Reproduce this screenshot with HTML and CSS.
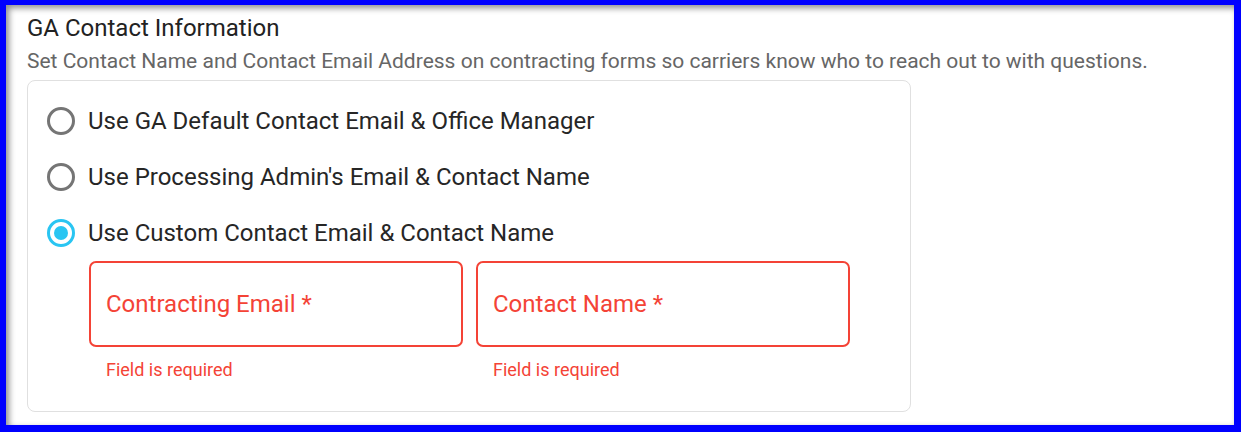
FILE: index.html
```html
<!DOCTYPE html>
<html lang="en">
<head>
    <meta charset="UTF-8">
    <title>GA Contact Information</title>
    <link rel="stylesheet" href="styles.css">
</head>
<body>
    <div class="frame">
        <section class="settings">
            <h2 class="title">GA Contact Information</h2>
            <p class="subtitle">Set Contact Name and Contact Email Address on contracting forms so carriers know who to reach out to with questions.</p>

            <div class="card">
                <label class="option">
                    <span class="radio"></span>
                    <span class="option-label">Use GA Default Contact Email &amp; Office Manager</span>
                </label>
                <label class="option">
                    <span class="radio"></span>
                    <span class="option-label">Use Processing Admin's Email &amp; Contact Name</span>
                </label>
                <label class="option">
                    <span class="radio checked"></span>
                    <span class="option-label">Use Custom Contact Email &amp; Contact Name</span>
                </label>

                <div class="fields">
                    <div class="field">
                        <div class="field-box">
                            <span class="field-label">Contracting Email *</span>
                        </div>
                        <div class="helper">Field is required</div>
                    </div>
                    <div class="field">
                        <div class="field-box">
                            <span class="field-label">Contact Name *</span>
                        </div>
                        <div class="helper">Field is required</div>
                    </div>
                </div>
            </div>
        </section>
    </div>
</body>
</html>
```

FILE: styles.css
```css
* {
    margin: 0;
    padding: 0;
    box-sizing: border-box;
}

body {
    font-family: Roboto, 'Liberation Sans', sans-serif;
    background-color: #ffffff;
    color: #212121;
}

.frame {
    height: 432px;
    border-style: solid;
    border-color: #0000ff;
    border-width: 5px 7px 7px 6px;
    box-shadow: inset 3px 3px 6px rgba(0, 0, 0, 0.45);
    overflow: hidden;
}

.settings {
    padding: 9px 21px 0;
}

.title {
    font-size: 24px;
    font-weight: 400;
    line-height: 28px;
    color: #222222;
}

.subtitle {
    font-size: 21px;
    line-height: 28px;
    margin-top: 5px;
    color: #666666;
}

.card {
    width: 884px;
    margin-top: 5px;
    padding: 12px 20px 31px 19px;
    border: 1px solid #e0e0e0;
    border-radius: 8px;
}

.option {
    display: flex;
    align-items: center;
    height: 56px;
}

.radio {
    width: 28px;
    height: 28px;
    border: 3px solid #757575;
    border-radius: 50%;
    margin-right: 13px;
    position: relative;
}

.radio.checked {
    border-color: #29c5f2;
}

.radio.checked::after {
    content: "";
    position: absolute;
    top: 4px;
    left: 4px;
    width: 14px;
    height: 14px;
    border-radius: 50%;
    background-color: #29c5f2;
}

.option-label {
    font-size: 24px;
    color: #262626;
}

.fields {
    display: flex;
    gap: 13px;
    padding-left: 42px;
}

.field {
    width: 374px;
}

.field-box {
    height: 86px;
    border: 2px solid #f44336;
    border-radius: 7px;
    display: flex;
    align-items: center;
    padding: 0 15px;
}

.field-label {
    font-size: 24px;
    color: #f44336;
}

.helper {
    font-size: 18px;
    line-height: 21px;
    color: #f44336;
    padding: 12px 17px 0;
}
```
